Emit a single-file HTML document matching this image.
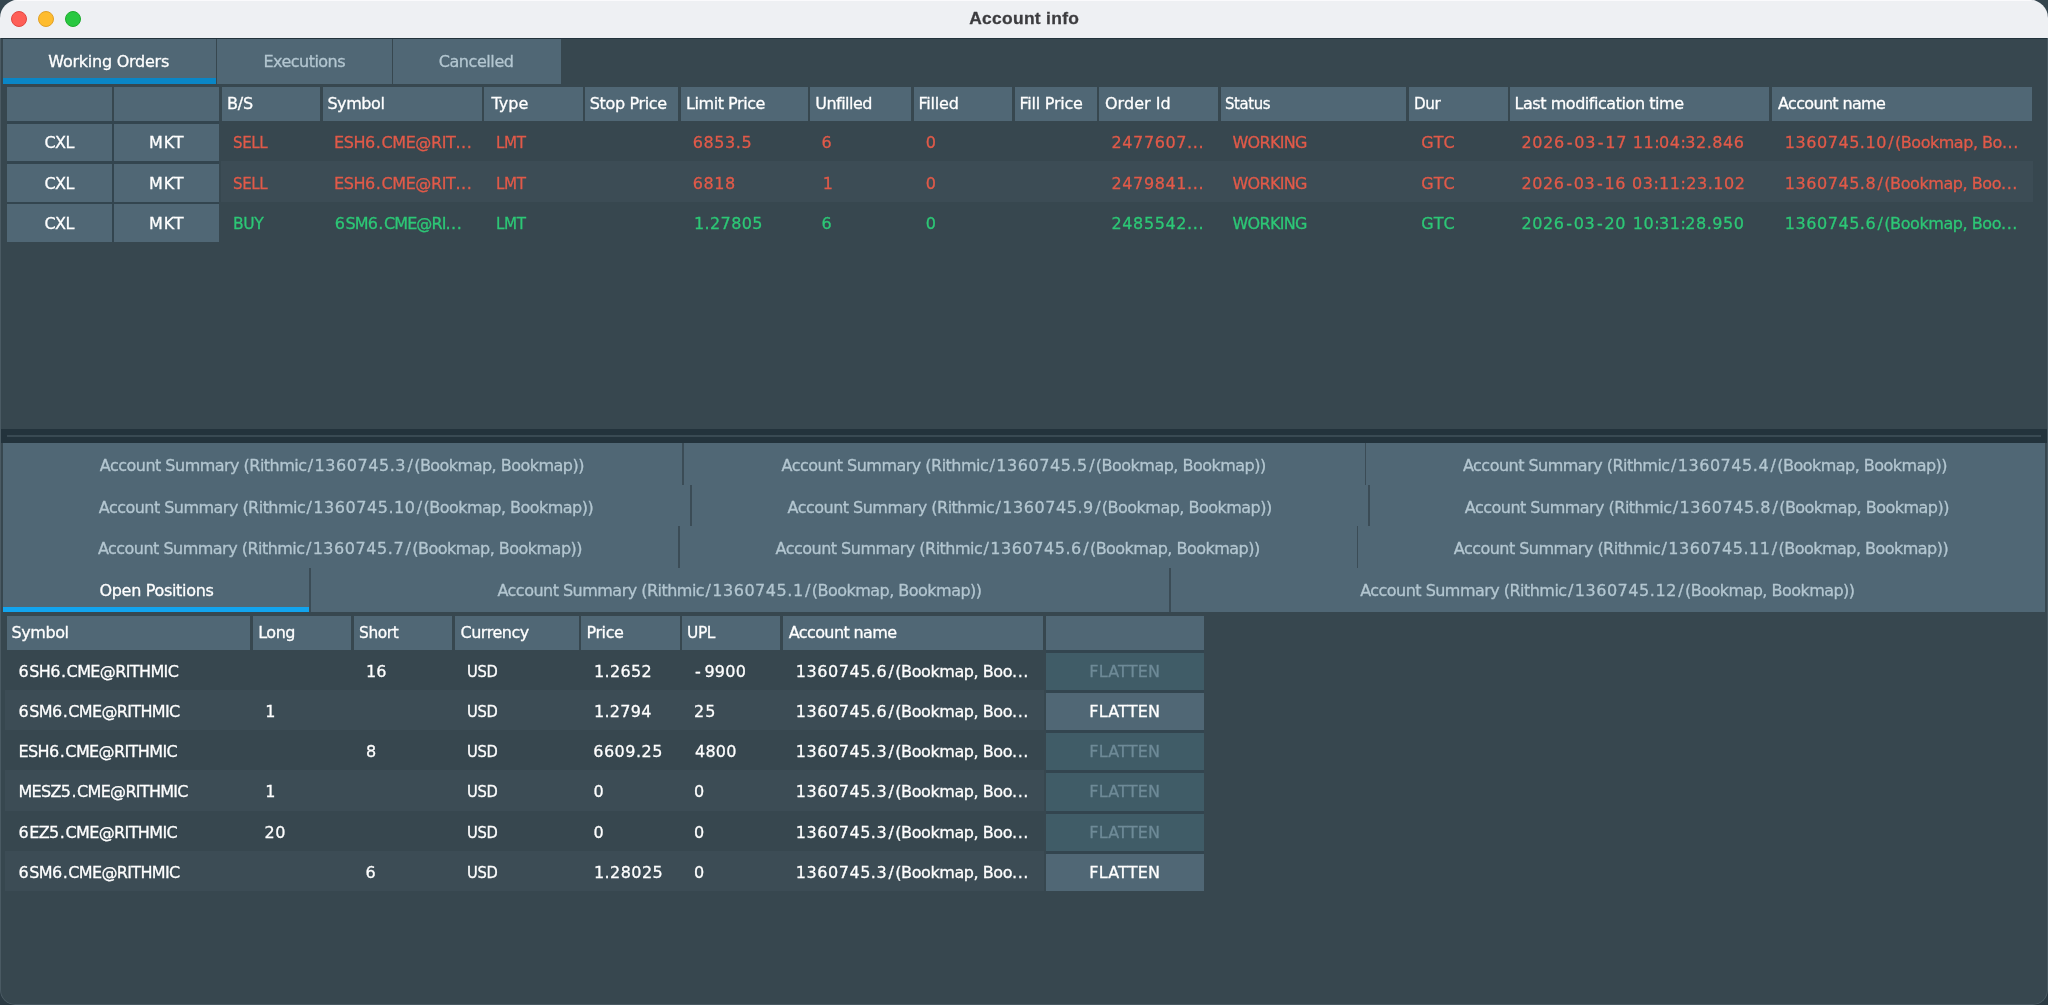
<!DOCTYPE html>
<html lang="en"><head><meta charset="utf-8"><title>Account info</title>
<style>
html,body{margin:0;padding:0}
body{width:2048px;height:1005px;overflow:hidden;background:#2b3a43;position:relative;font-family:"DejaVu Sans","Liberation Sans",sans-serif;font-size:16px}
.b{position:absolute}
.win{position:absolute;left:0;top:0;width:2048px;height:1005px;border-radius:18px 18px 15px 15px;overflow:hidden;background:#37474f}
.frame{position:absolute;left:0;top:38px;width:2046px;height:966px;border:1px solid #4a5a63;border-top:none;border-radius:0 0 15px 15px}
.txt{position:absolute;left:0;top:0;width:2048px;height:1005px;will-change:transform;opacity:.999}
.t{position:absolute;white-space:pre;transform-origin:0 0;line-height:20px;color:#fff;-webkit-text-stroke:0.3px}
.s{margin:0 1.35px;letter-spacing:0}
.h{margin:0 1.8px;letter-spacing:0}
.h0{margin:0 3.6px 0 0;letter-spacing:0}
.tb{position:absolute;left:0;top:0;width:2048px;height:37.5px;background:#eef0f3;box-shadow:inset 0 1px 0 #fafafc}
.tl{position:absolute;top:10.9px;width:16px;height:16px;border-radius:50%;box-sizing:border-box}
</style></head><body>
<div class="b" style="left:0;top:0;width:2048px;height:40px;background:#35454e"></div>
<div class="win">
<div class="tb"></div>
<div class="tl" style="left:11px;background:#fe5f57;border:1px solid #e14640"></div>
<div class="tl" style="left:37.9px;background:#febc2e;border:1px solid #e0a028"></div>
<div class="tl" style="left:64.8px;background:#28c840;border:1px solid #1eab2e"></div>
<div class="b" style="left:0;top:37.5px;width:2048px;height:1.6px;background:#22323b"></div>
<div class="b" style="left:3px;top:39px;width:212.5px;height:44.5px;background:#506775"></div>
<div class="b" style="left:217px;top:39px;width:174.6px;height:44.5px;background:#506775"></div>
<div class="b" style="left:393px;top:39px;width:168px;height:44.5px;background:#506775"></div>
<div class="b" style="left:3px;top:78px;width:212.5px;height:5.5px;background:#0a86c6"></div>
<div class="b" style="left:7px;top:87.25px;width:105px;height:33.5px;background:#506775"></div>
<div class="b" style="left:114px;top:87.25px;width:105px;height:33.5px;background:#506775"></div>
<div class="b" style="left:222px;top:87.25px;width:98px;height:33.5px;background:#506775"></div>
<div class="b" style="left:322.75px;top:87.25px;width:159.25px;height:33.5px;background:#506775"></div>
<div class="b" style="left:484.25px;top:87.25px;width:98.25px;height:33.5px;background:#506775"></div>
<div class="b" style="left:585px;top:87.25px;width:93px;height:33.5px;background:#506775"></div>
<div class="b" style="left:680.5px;top:87.25px;width:127px;height:33.5px;background:#506775"></div>
<div class="b" style="left:810px;top:87.25px;width:101.25px;height:33.5px;background:#506775"></div>
<div class="b" style="left:913.75px;top:87.25px;width:98.25px;height:33.5px;background:#506775"></div>
<div class="b" style="left:1014.5px;top:87.25px;width:82.25px;height:33.5px;background:#506775"></div>
<div class="b" style="left:1099.25px;top:87.25px;width:118.75px;height:33.5px;background:#506775"></div>
<div class="b" style="left:1220.5px;top:87.25px;width:185.75px;height:33.5px;background:#506775"></div>
<div class="b" style="left:1409.25px;top:87.25px;width:98.25px;height:33.5px;background:#506775"></div>
<div class="b" style="left:1510px;top:87.25px;width:259.25px;height:33.5px;background:#506775"></div>
<div class="b" style="left:1772px;top:87.25px;width:260px;height:33.5px;background:#506775"></div>
<div class="b" style="left:6.9px;top:121.1px;width:212.1px;height:40.25px;background:#33454f"></div>
<div class="b" style="left:7px;top:123.9px;width:105px;height:37.45px;background:#506775"></div>
<div class="b" style="left:114px;top:123.9px;width:105px;height:37.45px;background:#506775"></div>
<div class="b" style="left:220.5px;top:161.35px;width:1812.5px;height:40.25px;background:#3c4c55"></div>
<div class="b" style="left:6.9px;top:161.35px;width:212.1px;height:40.25px;background:#33454f"></div>
<div class="b" style="left:7px;top:164.15px;width:105px;height:37.45px;background:#506775"></div>
<div class="b" style="left:114px;top:164.15px;width:105px;height:37.45px;background:#506775"></div>
<div class="b" style="left:6.9px;top:201.6px;width:212.1px;height:40.25px;background:#33454f"></div>
<div class="b" style="left:7px;top:204.4px;width:105px;height:37.45px;background:#506775"></div>
<div class="b" style="left:114px;top:204.4px;width:105px;height:37.45px;background:#506775"></div>
<div class="b" style="left:1px;top:429px;width:2046px;height:14px;background:#23333c"></div>
<div class="b" style="left:7px;top:435.3px;width:2034px;height:1.7px;background:#394a53"></div>
<div class="b" style="left:3px;top:443px;width:2042px;height:169.1px;background:#3b4c56"></div>
<div class="b" style="left:3px;top:443px;width:679.2px;height:41.6px;background:#506775"></div>
<div class="b" style="left:684px;top:443px;width:680.6px;height:41.6px;background:#506775"></div>
<div class="b" style="left:1366.4px;top:443px;width:678.6px;height:41.6px;background:#506775"></div>
<div class="b" style="left:3px;top:484.6px;width:687.4px;height:41.6px;background:#506775"></div>
<div class="b" style="left:692.2px;top:484.6px;width:676.2px;height:41.6px;background:#506775"></div>
<div class="b" style="left:1370.2px;top:484.6px;width:674.8px;height:41.6px;background:#506775"></div>
<div class="b" style="left:3px;top:526.2px;width:675.3px;height:41.6px;background:#506775"></div>
<div class="b" style="left:680.1px;top:526.2px;width:676.5px;height:41.6px;background:#506775"></div>
<div class="b" style="left:1358.4px;top:526.2px;width:686.6px;height:41.6px;background:#506775"></div>
<div class="b" style="left:3px;top:567.8px;width:306.4px;height:44.3px;background:#506775"></div>
<div class="b" style="left:311px;top:567.8px;width:858.4px;height:44.3px;background:#506775"></div>
<div class="b" style="left:1171.2px;top:567.8px;width:873.8px;height:44.3px;background:#506775"></div>
<div class="b" style="left:3px;top:606.7px;width:306.4px;height:5.4px;background:#12a4ee"></div>
<div class="b" style="left:7px;top:616px;width:243px;height:33.7px;background:#506775"></div>
<div class="b" style="left:253px;top:616px;width:98.25px;height:33.7px;background:#506775"></div>
<div class="b" style="left:353.75px;top:616px;width:98.25px;height:33.7px;background:#506775"></div>
<div class="b" style="left:455px;top:616px;width:123.75px;height:33.7px;background:#506775"></div>
<div class="b" style="left:581.25px;top:616px;width:98.25px;height:33.7px;background:#506775"></div>
<div class="b" style="left:682px;top:616px;width:98px;height:33.7px;background:#506775"></div>
<div class="b" style="left:783px;top:616px;width:260px;height:33.7px;background:#506775"></div>
<div class="b" style="left:1045.6px;top:616px;width:158.6px;height:33.7px;background:#506775"></div>
<div class="b" style="left:1045.6px;top:649.7px;width:158.6px;height:40.25px;background:#33454f"></div>
<div class="b" style="left:1045.6px;top:652.5px;width:158.6px;height:37.45px;background:#405c67"></div>
<div class="b" style="left:5px;top:689.95px;width:1038.7px;height:40.25px;background:#3c4c55"></div>
<div class="b" style="left:1045.6px;top:689.95px;width:158.6px;height:40.25px;background:#33454f"></div>
<div class="b" style="left:1045.6px;top:692.75px;width:158.6px;height:37.45px;background:#506775"></div>
<div class="b" style="left:1045.6px;top:730.2px;width:158.6px;height:40.25px;background:#33454f"></div>
<div class="b" style="left:1045.6px;top:733px;width:158.6px;height:37.45px;background:#405c67"></div>
<div class="b" style="left:5px;top:770.45px;width:1038.7px;height:40.25px;background:#3c4c55"></div>
<div class="b" style="left:1045.6px;top:770.45px;width:158.6px;height:40.25px;background:#33454f"></div>
<div class="b" style="left:1045.6px;top:773.25px;width:158.6px;height:37.45px;background:#405c67"></div>
<div class="b" style="left:1045.6px;top:810.7px;width:158.6px;height:40.25px;background:#33454f"></div>
<div class="b" style="left:1045.6px;top:813.5px;width:158.6px;height:37.45px;background:#405c67"></div>
<div class="b" style="left:5px;top:850.95px;width:1038.7px;height:40.25px;background:#3c4c55"></div>
<div class="b" style="left:1045.6px;top:850.95px;width:158.6px;height:40.25px;background:#33454f"></div>
<div class="b" style="left:1045.6px;top:853.75px;width:158.6px;height:37.45px;background:#506775"></div>
<div class="txt">
<div class="t" style="left:48.25px;top:52px;letter-spacing:-0.24px">Working Orders</div>
<div class="t" style="left:263.5px;top:52px;letter-spacing:-0.54px;color:#b4c7d1">Executions</div>
<div class="t" style="left:438.7px;top:52px;letter-spacing:-0.42px;color:#b4c7d1">Cancelled</div>
<div class="t" style="left:227.1px;top:93.75px;letter-spacing:-0.23px">B/S</div>
<div class="t" style="left:327.4px;top:93.75px;letter-spacing:-0.43px">Symbol</div>
<div class="t" style="left:491.5px;top:93.75px;letter-spacing:0.03px">Type</div>
<div class="t" style="left:589.75px;top:93.75px;letter-spacing:-0.35px">Stop Price</div>
<div class="t" style="left:686px;top:93.75px;letter-spacing:-0.44px">Limit Price</div>
<div class="t" style="left:815.25px;top:93.75px;letter-spacing:-0.52px">Unfilled</div>
<div class="t" style="left:918.5px;top:93.75px;letter-spacing:-0.19px">Filled</div>
<div class="t" style="left:1019.5px;top:93.75px;letter-spacing:-0.24px">Fill Price</div>
<div class="t" style="left:1105px;top:93.75px;letter-spacing:0.03px">Order Id</div>
<div class="t" style="left:1225.32px;top:93.75px;letter-spacing:-0.4px;transform:scaleX(0.9287)">Status</div>
<div class="t" style="left:1414.05px;top:93.75px;letter-spacing:-0.4px;transform:scaleX(0.9490)">Dur</div>
<div class="t" style="left:1514.5px;top:93.75px;letter-spacing:-0.45px">Last modification time</div>
<div class="t" style="left:1778px;top:93.75px;letter-spacing:-0.66px">Account name</div>
<div class="t" style="left:44.5px;top:133.25px;letter-spacing:-0.57px">CXL</div>
<div class="t" style="left:149px;top:133.25px;letter-spacing:0.85px">MKT</div>
<div class="t" style="left:233.31px;top:133.25px;letter-spacing:-0.4px;transform:scaleX(0.9380);color:#e25b4a">SELL</div>
<div class="t" style="left:334px;top:133.25px;letter-spacing:-0.4px;color:#e25b4a">ESH<span style="letter-spacing:0.55px">6.</span>CME@RIT<span style="letter-spacing:0.55px">...</span></div>
<div class="t" style="left:496.05px;top:133.25px;letter-spacing:-0.4px;transform:scaleX(0.9460);color:#e25b4a">LMT</div>
<div class="t" style="left:692.75px;top:133.25px;color:#e25b4a"><span style="letter-spacing:0.59px">6853.5</span></div>
<div class="t" style="left:821.5px;top:133.25px;color:#e25b4a"><span style="letter-spacing:0.55px">6</span></div>
<div class="t" style="left:925.75px;top:133.25px;color:#e25b4a"><span style="letter-spacing:0.55px">0</span></div>
<div class="t" style="left:1111.5px;top:133.25px;color:#e25b4a"><span style="letter-spacing:0.62px">2477607...</span></div>
<div class="t" style="left:1232.5px;top:133.25px;letter-spacing:-0.7px;color:#e25b4a">WORKING</div>
<div class="t" style="left:1421.25px;top:133.25px;letter-spacing:0.79px;color:#e25b4a">GTC</div>
<div class="t" style="left:1521.5px;top:133.25px;color:#e25b4a"><span style="letter-spacing:0.67px">2026</span><span class="h">-</span><span style="letter-spacing:0.67px">03</span><span class="h">-</span><span style="letter-spacing:0.67px">17</span></div>
<div class="t" style="left:1632.75px;top:133.25px;letter-spacing:-0.63px;color:#e25b4a"><span style="letter-spacing:0.55px">11</span>:<span style="letter-spacing:0.55px">04</span>:<span style="letter-spacing:0.55px">32.846</span></div>
<div class="t" style="left:1784.75px;top:133.25px;letter-spacing:-0.47px;color:#e25b4a"><span style="letter-spacing:0.55px">1360745.10</span><span class="s">/</span>(Bookmap, Bo<span style="letter-spacing:0.55px">...</span></div>
<div class="t" style="left:44.5px;top:173.5px;letter-spacing:-0.57px">CXL</div>
<div class="t" style="left:149px;top:173.5px;letter-spacing:0.85px">MKT</div>
<div class="t" style="left:233.31px;top:173.5px;letter-spacing:-0.4px;transform:scaleX(0.9380);color:#e25b4a">SELL</div>
<div class="t" style="left:334px;top:173.5px;letter-spacing:-0.4px;color:#e25b4a">ESH<span style="letter-spacing:0.55px">6.</span>CME@RIT<span style="letter-spacing:0.55px">...</span></div>
<div class="t" style="left:496.05px;top:173.5px;letter-spacing:-0.4px;transform:scaleX(0.9460);color:#e25b4a">LMT</div>
<div class="t" style="left:692.75px;top:173.5px;color:#e25b4a"><span style="letter-spacing:0.57px">6818</span></div>
<div class="t" style="left:822.75px;top:173.5px;color:#e25b4a"><span style="letter-spacing:0.55px">1</span></div>
<div class="t" style="left:925.75px;top:173.5px;color:#e25b4a"><span style="letter-spacing:0.55px">0</span></div>
<div class="t" style="left:1111.5px;top:173.5px;color:#e25b4a"><span style="letter-spacing:0.62px">2479841...</span></div>
<div class="t" style="left:1232.5px;top:173.5px;letter-spacing:-0.7px;color:#e25b4a">WORKING</div>
<div class="t" style="left:1421.25px;top:173.5px;letter-spacing:0.79px;color:#e25b4a">GTC</div>
<div class="t" style="left:1521.5px;top:173.5px;color:#e25b4a"><span style="letter-spacing:0.53px">2026</span><span class="h">-</span><span style="letter-spacing:0.53px">03</span><span class="h">-</span><span style="letter-spacing:0.53px">16</span></div>
<div class="t" style="left:1632px;top:173.5px;letter-spacing:0.25px;color:#e25b4a"><span style="letter-spacing:0.55px">03</span>:<span style="letter-spacing:0.55px">11</span>:<span style="letter-spacing:0.55px">23.102</span></div>
<div class="t" style="left:1784.75px;top:173.5px;letter-spacing:-0.43px;color:#e25b4a"><span style="letter-spacing:0.55px">1360745.8</span><span class="s">/</span>(Bookmap, Boo<span style="letter-spacing:0.55px">...</span></div>
<div class="t" style="left:44.5px;top:213.75px;letter-spacing:-0.57px">CXL</div>
<div class="t" style="left:149px;top:213.75px;letter-spacing:0.85px">MKT</div>
<div class="t" style="left:233.28px;top:213.75px;letter-spacing:-0.4px;transform:scaleX(0.9713);color:#2ec877">BUY</div>
<div class="t" style="left:334.75px;top:213.75px;letter-spacing:-0.91px;color:#2ec877"><span style="letter-spacing:0.55px">6</span>SM<span style="letter-spacing:0.55px">6.</span>CME@RI<span style="letter-spacing:0.55px">...</span></div>
<div class="t" style="left:496.05px;top:213.75px;letter-spacing:-0.4px;transform:scaleX(0.9460);color:#2ec877">LMT</div>
<div class="t" style="left:694px;top:213.75px;color:#2ec877"><span style="letter-spacing:0.38px">1.27805</span></div>
<div class="t" style="left:821.5px;top:213.75px;color:#2ec877"><span style="letter-spacing:0.55px">6</span></div>
<div class="t" style="left:925.75px;top:213.75px;color:#2ec877"><span style="letter-spacing:0.55px">0</span></div>
<div class="t" style="left:1111.5px;top:213.75px;color:#2ec877"><span style="letter-spacing:0.62px">2485542...</span></div>
<div class="t" style="left:1232.5px;top:213.75px;letter-spacing:-0.7px;color:#2ec877">WORKING</div>
<div class="t" style="left:1421.25px;top:213.75px;letter-spacing:0.79px;color:#2ec877">GTC</div>
<div class="t" style="left:1521.5px;top:213.75px;color:#2ec877"><span style="letter-spacing:0.53px">2026</span><span class="h">-</span><span style="letter-spacing:0.53px">03</span><span class="h">-</span><span style="letter-spacing:0.53px">20</span></div>
<div class="t" style="left:1632.75px;top:213.75px;letter-spacing:-0.63px;color:#2ec877"><span style="letter-spacing:0.55px">10</span>:<span style="letter-spacing:0.55px">31</span>:<span style="letter-spacing:0.55px">28.950</span></div>
<div class="t" style="left:1784.75px;top:213.75px;letter-spacing:-0.43px;color:#2ec877"><span style="letter-spacing:0.55px">1360745.6</span><span class="s">/</span>(Bookmap, Boo<span style="letter-spacing:0.55px">...</span></div>
<div class="t" style="left:99.85px;top:456.1px;letter-spacing:-0.52px;color:#b4c7d1">Account Summary (Rithmic<span class="s">/</span><span style="letter-spacing:0.55px">1360745.3</span><span class="s">/</span>(Bookmap, Bookmap))</div>
<div class="t" style="left:781.55px;top:456.1px;letter-spacing:-0.52px;color:#b4c7d1">Account Summary (Rithmic<span class="s">/</span><span style="letter-spacing:0.55px">1360745.5</span><span class="s">/</span>(Bookmap, Bookmap))</div>
<div class="t" style="left:1462.95px;top:456.1px;letter-spacing:-0.52px;color:#b4c7d1">Account Summary (Rithmic<span class="s">/</span><span style="letter-spacing:0.55px">1360745.4</span><span class="s">/</span>(Bookmap, Bookmap))</div>
<div class="t" style="left:98.8px;top:497.7px;letter-spacing:-0.53px;color:#b4c7d1">Account Summary (Rithmic<span class="s">/</span><span style="letter-spacing:0.55px">1360745.10</span><span class="s">/</span>(Bookmap, Bookmap))</div>
<div class="t" style="left:787.55px;top:497.7px;letter-spacing:-0.52px;color:#b4c7d1">Account Summary (Rithmic<span class="s">/</span><span style="letter-spacing:0.55px">1360745.9</span><span class="s">/</span>(Bookmap, Bookmap))</div>
<div class="t" style="left:1464.85px;top:497.7px;letter-spacing:-0.52px;color:#b4c7d1">Account Summary (Rithmic<span class="s">/</span><span style="letter-spacing:0.55px">1360745.8</span><span class="s">/</span>(Bookmap, Bookmap))</div>
<div class="t" style="left:97.9px;top:539.3px;letter-spacing:-0.52px;color:#b4c7d1">Account Summary (Rithmic<span class="s">/</span><span style="letter-spacing:0.55px">1360745.7</span><span class="s">/</span>(Bookmap, Bookmap))</div>
<div class="t" style="left:775.6px;top:539.3px;letter-spacing:-0.52px;color:#b4c7d1">Account Summary (Rithmic<span class="s">/</span><span style="letter-spacing:0.55px">1360745.6</span><span class="s">/</span>(Bookmap, Bookmap))</div>
<div class="t" style="left:1453.8px;top:539.3px;letter-spacing:-0.53px;color:#b4c7d1">Account Summary (Rithmic<span class="s">/</span><span style="letter-spacing:0.55px">1360745.11</span><span class="s">/</span>(Bookmap, Bookmap))</div>
<div class="t" style="left:99.5px;top:581px;letter-spacing:-0.32px">Open Positions</div>
<div class="t" style="left:497.45px;top:581px;letter-spacing:-0.52px;color:#b4c7d1">Account Summary (Rithmic<span class="s">/</span><span style="letter-spacing:0.55px">1360745.1</span><span class="s">/</span>(Bookmap, Bookmap))</div>
<div class="t" style="left:1360.2px;top:581px;letter-spacing:-0.53px;color:#b4c7d1">Account Summary (Rithmic<span class="s">/</span><span style="letter-spacing:0.55px">1360745.12</span><span class="s">/</span>(Bookmap, Bookmap))</div>
<div class="t" style="left:11.5px;top:622.5px;letter-spacing:-0.43px">Symbol</div>
<div class="t" style="left:258.25px;top:622.5px;letter-spacing:-0.52px">Long</div>
<div class="t" style="left:358.54px;top:622.5px;letter-spacing:-0.4px;transform:scaleX(0.9610)">Short</div>
<div class="t" style="left:460.5px;top:622.5px;letter-spacing:-0.48px">Currency</div>
<div class="t" style="left:586.5px;top:622.5px;letter-spacing:-0.42px">Price</div>
<div class="t" style="left:687.29px;top:622.5px;letter-spacing:-0.4px;transform:scaleX(0.9629)">UPL</div>
<div class="t" style="left:788.75px;top:622.5px;letter-spacing:-0.61px">Account name</div>
<div class="t" style="left:18.5px;top:661.6px;letter-spacing:-0.61px"><span style="letter-spacing:0.55px">6</span>SH<span style="letter-spacing:0.55px">6.</span>CME@RITHMIC</div>
<div class="t" style="left:366px;top:661.6px"><span style="letter-spacing:0.07px">16</span></div>
<div class="t" style="left:594px;top:661.6px"><span style="letter-spacing:0.34px">1.2652</span></div>
<div class="t" style="left:695px;top:661.6px"><span class="h0">-</span><span style="letter-spacing:0.28px">9900</span></div>
<div class="t" style="left:466.58px;top:661.6px;letter-spacing:-0.4px;transform:scaleX(0.9199)">USD</div>
<div class="t" style="left:795.75px;top:661.6px;letter-spacing:-0.43px"><span style="letter-spacing:0.55px">1360745.6</span><span class="s">/</span>(Bookmap, Boo<span style="letter-spacing:0.55px">...</span></div>
<div class="t" style="left:1089.3px;top:661.6px;letter-spacing:0.19px;color:#6f8b98">FLATTEN</div>
<div class="t" style="left:18.5px;top:701.85px;letter-spacing:-0.65px"><span style="letter-spacing:0.55px">6</span>SM<span style="letter-spacing:0.55px">6.</span>CME@RITHMIC</div>
<div class="t" style="left:265.25px;top:701.85px"><span style="letter-spacing:0.55px">1</span></div>
<div class="t" style="left:594px;top:701.85px"><span style="letter-spacing:0.29px">1.2794</span></div>
<div class="t" style="left:694px;top:701.85px"><span style="letter-spacing:1.07px">25</span></div>
<div class="t" style="left:466.58px;top:701.85px;letter-spacing:-0.4px;transform:scaleX(0.9199)">USD</div>
<div class="t" style="left:795.75px;top:701.85px;letter-spacing:-0.43px"><span style="letter-spacing:0.55px">1360745.6</span><span class="s">/</span>(Bookmap, Boo<span style="letter-spacing:0.55px">...</span></div>
<div class="t" style="left:1089.3px;top:701.85px;letter-spacing:0.19px">FLATTEN</div>
<div class="t" style="left:18.5px;top:742.1px;letter-spacing:-0.61px">ESH<span style="letter-spacing:0.55px">6.</span>CME@RITHMIC</div>
<div class="t" style="left:366px;top:742.1px"><span style="letter-spacing:0.55px">8</span></div>
<div class="t" style="left:593.25px;top:742.1px"><span style="letter-spacing:0.5px">6609.25</span></div>
<div class="t" style="left:695px;top:742.1px"><span style="letter-spacing:0.24px">4800</span></div>
<div class="t" style="left:466.58px;top:742.1px;letter-spacing:-0.4px;transform:scaleX(0.9199)">USD</div>
<div class="t" style="left:795.75px;top:742.1px;letter-spacing:-0.43px"><span style="letter-spacing:0.55px">1360745.3</span><span class="s">/</span>(Bookmap, Boo<span style="letter-spacing:0.55px">...</span></div>
<div class="t" style="left:1089.3px;top:742.1px;letter-spacing:0.19px;color:#6f8b98">FLATTEN</div>
<div class="t" style="left:18.5px;top:782.35px;letter-spacing:-0.7px">MESZ<span style="letter-spacing:0.55px">5.</span>CME@RITHMIC</div>
<div class="t" style="left:265.25px;top:782.35px"><span style="letter-spacing:0.55px">1</span></div>
<div class="t" style="left:593.4px;top:782.35px"><span style="letter-spacing:0.55px">0</span></div>
<div class="t" style="left:694px;top:782.35px"><span style="letter-spacing:0.55px">0</span></div>
<div class="t" style="left:466.58px;top:782.35px;letter-spacing:-0.4px;transform:scaleX(0.9199)">USD</div>
<div class="t" style="left:795.75px;top:782.35px;letter-spacing:-0.43px"><span style="letter-spacing:0.55px">1360745.3</span><span class="s">/</span>(Bookmap, Boo<span style="letter-spacing:0.55px">...</span></div>
<div class="t" style="left:1089.3px;top:782.35px;letter-spacing:0.19px;color:#6f8b98">FLATTEN</div>
<div class="t" style="left:18.5px;top:822.6px;letter-spacing:-0.62px"><span style="letter-spacing:0.55px">6</span>EZ<span style="letter-spacing:0.55px">5.</span>CME@RITHMIC</div>
<div class="t" style="left:264.6px;top:822.6px"><span style="letter-spacing:0.52px">20</span></div>
<div class="t" style="left:593.4px;top:822.6px"><span style="letter-spacing:0.55px">0</span></div>
<div class="t" style="left:694px;top:822.6px"><span style="letter-spacing:0.55px">0</span></div>
<div class="t" style="left:466.58px;top:822.6px;letter-spacing:-0.4px;transform:scaleX(0.9199)">USD</div>
<div class="t" style="left:795.75px;top:822.6px;letter-spacing:-0.43px"><span style="letter-spacing:0.55px">1360745.3</span><span class="s">/</span>(Bookmap, Boo<span style="letter-spacing:0.55px">...</span></div>
<div class="t" style="left:1089.3px;top:822.6px;letter-spacing:0.19px;color:#6f8b98">FLATTEN</div>
<div class="t" style="left:18.5px;top:862.85px;letter-spacing:-0.65px"><span style="letter-spacing:0.55px">6</span>SM<span style="letter-spacing:0.55px">6.</span>CME@RITHMIC</div>
<div class="t" style="left:365.4px;top:862.85px"><span style="letter-spacing:0.55px">6</span></div>
<div class="t" style="left:594px;top:862.85px"><span style="letter-spacing:0.42px">1.28025</span></div>
<div class="t" style="left:694px;top:862.85px"><span style="letter-spacing:0.55px">0</span></div>
<div class="t" style="left:466.58px;top:862.85px;letter-spacing:-0.4px;transform:scaleX(0.9199)">USD</div>
<div class="t" style="left:795.75px;top:862.85px;letter-spacing:-0.43px"><span style="letter-spacing:0.55px">1360745.3</span><span class="s">/</span>(Bookmap, Boo<span style="letter-spacing:0.55px">...</span></div>
<div class="t" style="left:1089.3px;top:862.85px;letter-spacing:0.19px">FLATTEN</div>
<div class="t" style="left:969.2px;top:8.1px;letter-spacing:0.31px;color:#3c3c3f;font-size:17.4px;font-weight:bold;font-family:'Liberation Sans',sans-serif">Account info</div>
</div>
<div class="frame"></div>
</div>
</body></html>
